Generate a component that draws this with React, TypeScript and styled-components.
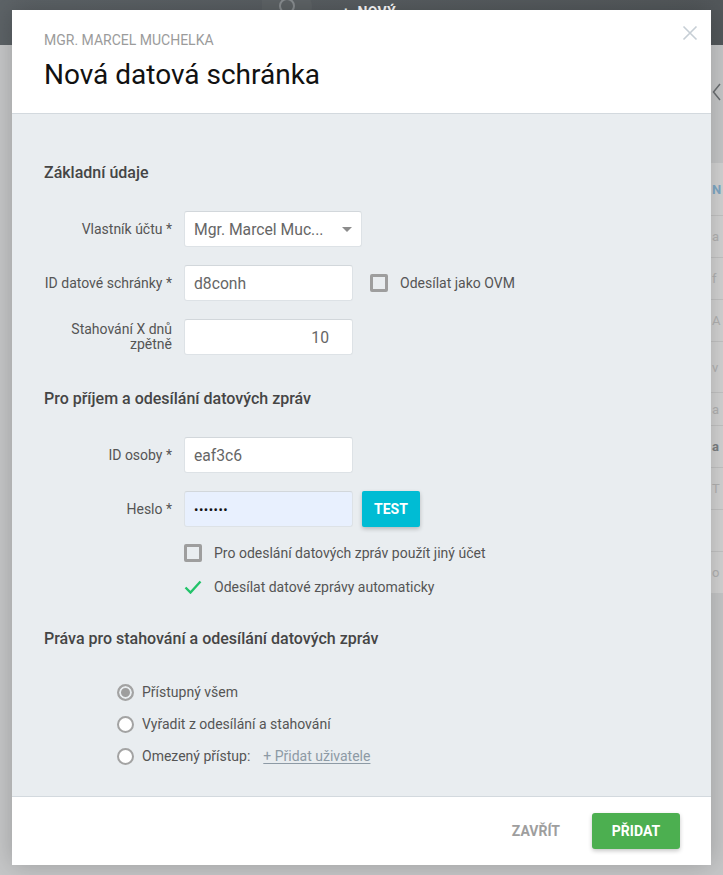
import React from 'react'
import styled, { createGlobalStyle } from 'styled-components'

const GlobalStyle = createGlobalStyle`
  html, body {
    margin: 0;
    padding: 0;
  }
  body {
    font-family: Roboto, 'Liberation Sans', Arial, sans-serif;
    -webkit-font-smoothing: antialiased;
  }
  * {
    box-sizing: border-box;
  }
`

const Page = styled.div`
  position: relative;
  width: 723px;
  height: 875px;
  overflow: hidden;
  background: #c6c7c8;
`

const TopBar = styled.div`
  height: 45px;
  background: linear-gradient(90deg, #5d6367 0%, #53585b 100%);
  display: flex;
  align-items: flex-start;
  padding-left: 262px;
  gap: 30px;
`

const SearchPill = styled.div`
  width: 50px;
  height: 34px;
  margin-top: -10px;
  border-radius: 0 17px 17px 0;
  background: #5f6467;
  display: flex;
  align-items: center;
  justify-content: center;
`

const NewButton = styled.div`
  margin-top: 4px;
  color: #ffffff;
  font-size: 14px;
  font-weight: 700;
  letter-spacing: 0.3px;
`

const Content = styled.div`
  padding-left: 708px;
`

const BackArrow = styled.div`
  height: 118px;
  padding-top: 38px;
  padding-left: 4px;
`

const SidePanel = styled.div`
  width: 15px;
  overflow: hidden;
  background: #d4d4d4;
`

const SideRow = styled.div<{ $h: number; $head?: boolean; $dark?: boolean }>`
  height: ${(p) => p.$h}px;
  display: flex;
  align-items: center;
  padding-left: 4px;
  border-bottom: 1px solid #c4c4c4;
  font-size: 13px;
  font-weight: ${(p) => (p.$head || p.$dark ? 700 : 400)};
  color: ${(p) => (p.$head ? '#7fa9c6' : p.$dark ? '#7d8184' : '#b3b3b3')};
  &:last-child {
    border-bottom: none;
  }
`

const Modal = styled.div`
  position: absolute;
  top: 10px;
  left: 12px;
  width: 699px;
  background: #ffffff;
  box-shadow: 0 0 24px rgba(0, 0, 0, 0.22);
`

const Header = styled.div`
  position: relative;
  height: 104px;
  padding: 22px 32px 0;
  border-bottom: 1px solid #d3d9de;
`

const Overline = styled.div`
  font-size: 14px;
  line-height: 16px;
  color: #9b9b9b;
  text-transform: uppercase;
`

const Title = styled.h1`
  margin: 11px 0 0;
  font-size: 28px;
  line-height: 32px;
  font-weight: 400;
  color: #111111;
`

const CloseButton = styled.button`
  position: absolute;
  top: 15px;
  right: 12px;
  width: 18px;
  height: 16px;
  padding: 0;
  border: none;
  background: none;
  display: flex;
  align-items: center;
  justify-content: center;
  cursor: pointer;
`

const Body = styled.div`
  background: #e9edf0;
  padding: 49px 32px 30px;
`

const Section = styled.section<{ $top?: number }>`
  margin-top: ${(p) => p.$top ?? 0}px;
`

const SectionTitle = styled.h2<{ $gap?: number }>`
  margin: 0 0 ${(p) => p.$gap ?? 28}px;
  font-size: 16px;
  line-height: 20px;
  font-weight: 500;
  color: #454545;
`

const Rows = styled.div`
  display: flex;
  flex-direction: column;
  gap: 18px;
`

const Row = styled.div`
  display: flex;
  align-items: center;
  height: 36px;
`

const Label = styled.label`
  width: 128px;
  margin-right: 12px;
  text-align: right;
  font-size: 14px;
  line-height: 15px;
  color: #555555;
`

const Input = styled.div<{ $width: number; $align?: string; $fill?: string }>`
  width: ${(p) => p.$width}px;
  height: 36px;
  padding: 0 ${(p) => (p.$align === 'right' ? 23 : 9)}px 0 9px;
  display: flex;
  align-items: center;
  justify-content: ${(p) => (p.$align === 'right' ? 'flex-end' : 'flex-start')};
  background: ${(p) => p.$fill ?? '#ffffff'};
  border: 1px solid #dde2e6;
  border-top-color: #d2d7db;
  border-radius: 3px;
  font-size: 15.7px;
  color: #666666;
`

const Dots = styled.span`
  color: #111111;
  font-size: 13px;
  letter-spacing: 0.5px;
`

const SelectBox = styled(Input)`
  justify-content: space-between;
  padding-right: 9px;
`

const Caret = styled.span`
  width: 0;
  height: 0;
  border-left: 5px solid transparent;
  border-right: 5px solid transparent;
  border-top: 5px solid #8c8c8c;
`

const Checkbox = styled.span`
  width: 18px;
  height: 18px;
  flex: none;
  border: 3px solid #9e9e9e;
  border-radius: 2px;
  background: transparent;
`

const InlineOption = styled.div`
  display: flex;
  align-items: center;
  gap: 12px;
  margin-left: 17px;
  font-size: 14px;
  color: #555555;
`

const TestButton = styled.button`
  margin-left: 9px;
  width: 58px;
  height: 36px;
  border: none;
  border-radius: 2px;
  background: #00bcd4;
  color: #ffffff;
  font-family: inherit;
  font-size: 14px;
  font-weight: 700;
  box-shadow: 0 2px 4px rgba(0, 0, 0, 0.22);
`

const Options = styled.div`
  margin: 17px 0 0 140px;
  display: flex;
  flex-direction: column;
  gap: 16px;
`

const Option = styled.div`
  display: flex;
  align-items: center;
  gap: 12px;
  height: 18px;
  font-size: 14px;
  color: #555555;
`

const RadioGroup = styled.div`
  margin: 33px 0 0 73px;
  display: flex;
  flex-direction: column;
  gap: 12px;
`

const RadioRow = styled.div`
  display: flex;
  align-items: center;
  height: 20px;
  gap: 8px;
  font-size: 14px;
  color: #555555;
`

const Radio = styled.span<{ $checked?: boolean }>`
  width: 17px;
  height: 17px;
  flex: none;
  border-radius: 50%;
  border: 2px solid #a3a3a3;
  background: ${(p) => (p.$checked ? '#9e9e9e' : '#ffffff')};
  box-shadow: ${(p) => (p.$checked ? 'inset 0 0 0 2px #e9edf0' : 'none')};
`

const AddLink = styled.a`
  margin-left: 5px;
  color: #8d9aa5;
  text-decoration: underline;
  text-underline-offset: 2px;
`

const Footer = styled.div`
  height: 69px;
  border-top: 1px solid #d3d9de;
  padding: 16px 31px 0;
  display: flex;
  justify-content: flex-end;
  align-items: flex-start;
  gap: 16px;
`

const FlatButton = styled.button`
  height: 36px;
  padding: 0 16px;
  border: none;
  background: none;
  color: #9e9e9e;
  font-family: inherit;
  font-size: 14px;
  font-weight: 700;
`

const PrimaryButton = styled.button`
  width: 88px;
  height: 36px;
  border: none;
  border-radius: 3px;
  background: #4caf50;
  color: #ffffff;
  font-family: inherit;
  font-size: 14px;
  font-weight: 700;
  box-shadow: 0 2px 4px rgba(0, 0, 0, 0.22);
`

// strip of the list behind the overlay, only its left letters show
const sideRows = [
  { h: 53, text: 'N', head: true },
  { h: 42, text: 'a' },
  { h: 42, text: 'f' },
  { h: 42, text: 'A' },
  { h: 51, text: 'v' },
  { h: 33, text: 'a' },
  { h: 42, text: 'a', dark: true },
  { h: 42, text: 'T' },
  { h: 42, text: '' },
  { h: 41, text: 'o' },
]

const CheckMark = () => (
  <svg width="18" height="14" viewBox="0 0 18 14">
    <polyline points="1.5,7.5 6.5,12.5 16.5,1.5" fill="none" stroke="#22c36a" strokeWidth="2.4" />
  </svg>
)

const App = () => {
  return (
    <Page>
      <GlobalStyle />
      <TopBar>
        <SearchPill>
          <svg width="20" height="20" viewBox="0 0 20 20">
            <circle cx="10" cy="9" r="7" fill="none" stroke="#8a8f92" strokeWidth="2" />
          </svg>
        </SearchPill>
        <NewButton>+&nbsp;&nbsp;NOVÝ</NewButton>
      </TopBar>
      <Content>
        <BackArrow>
          <svg width="10" height="18" viewBox="0 0 10 18">
            <polyline points="8,1 1.5,9 8,17" fill="none" stroke="#6b6f72" strokeWidth="1.5" />
          </svg>
        </BackArrow>
        <SidePanel>
          {sideRows.map((r, i) => (
            <SideRow key={i} $h={r.h} $head={r.head} $dark={r.dark}>
              {r.text}
            </SideRow>
          ))}
        </SidePanel>
      </Content>

      <Modal>
        <Header>
          <Overline>Mgr. Marcel Muchelka</Overline>
          <Title>Nová datová schránka</Title>
          <CloseButton aria-label="Zavřít">
            <svg width="16" height="16" viewBox="0 0 16 16">
              <path d="M1.5 1.5 L14.5 14.5 M14.5 1.5 L1.5 14.5" stroke="#c6ced5" strokeWidth="1.6" />
            </svg>
          </CloseButton>
        </Header>

        <Body>
          <Section>
            <SectionTitle>Základní údaje</SectionTitle>
            <Rows>
              <Row>
                <Label>Vlastník účtu *</Label>
                <SelectBox $width={178}>
                  Mgr. Marcel Muc...
                  <Caret />
                </SelectBox>
              </Row>
              <Row>
                <Label>ID datové schránky *</Label>
                <Input $width={169}>d8conh</Input>
                <InlineOption>
                  <Checkbox />
                  Odesílat jako OVM
                </InlineOption>
              </Row>
              <Row>
                <Label>Stahování X dnů zpětně</Label>
                <Input $width={169} $align="right">
                  10
                </Input>
              </Row>
            </Rows>
          </Section>

          <Section $top={34}>
            <SectionTitle>Pro příjem a odesílání datových zpráv</SectionTitle>
            <Rows>
              <Row>
                <Label>ID osoby *</Label>
                <Input $width={169}>eaf3c6</Input>
              </Row>
              <Row>
                <Label>Heslo *</Label>
                <Input $width={169} $fill="#e8f0fe">
                  <Dots>•••••••</Dots>
                </Input>
                <TestButton>TEST</TestButton>
              </Row>
            </Rows>
            <Options>
              <Option>
                <Checkbox />
                Pro odeslání datových zpráv použít jiný účet
              </Option>
              <Option>
                <CheckMark />
                Odesílat datové zprávy automaticky
              </Option>
            </Options>
          </Section>

          <Section $top={33}>
            <SectionTitle $gap={0}>Práva pro stahování a odesílání datových zpráv</SectionTitle>
            <RadioGroup>
              <RadioRow>
                <Radio $checked />
                Přístupný všem
              </RadioRow>
              <RadioRow>
                <Radio />
                Vyřadit z odesílání a stahování
              </RadioRow>
              <RadioRow>
                <Radio />
                Omezený přístup:
                <AddLink>+ Přidat uživatele</AddLink>
              </RadioRow>
            </RadioGroup>
          </Section>
        </Body>

        <Footer>
          <FlatButton>ZAVŘÍT</FlatButton>
          <PrimaryButton>PŘIDAT</PrimaryButton>
        </Footer>
      </Modal>
    </Page>
  )
}

export default App
